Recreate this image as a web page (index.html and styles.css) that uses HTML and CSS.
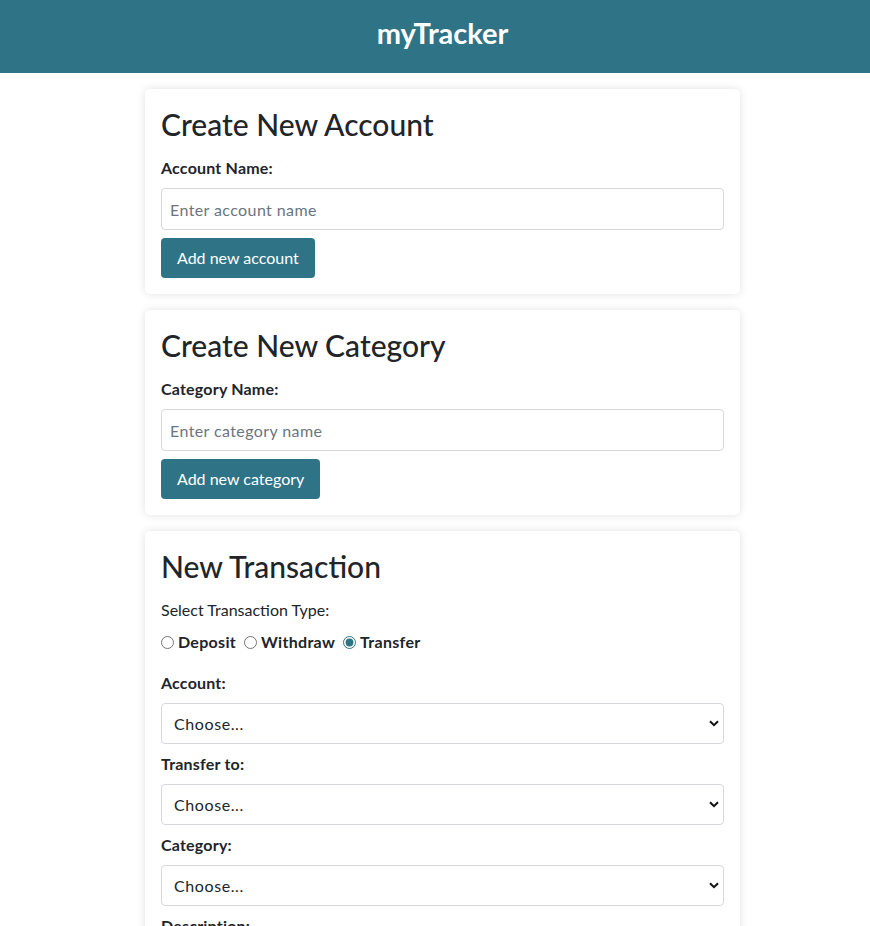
FILE: index.html
```html
<!DOCTYPE html>
<html lang="en">
<head>
<meta charset="utf-8">
<title>myTracker</title>
<link rel="stylesheet" href="styles.css">
</head>
<body>
<header class="topbar">
  <h1 class="brand">myTracker</h1>
</header>
<main class="page">
  <div class="column">
    <section class="card">
      <h2 class="card-title">Create New Account</h2>
      <label class="field-label" for="acc">Account Name:</label>
      <input class="text-input" id="acc" type="text" placeholder="Enter account name">
      <button class="btn">Add new account</button>
    </section>
    <section class="card">
      <h2 class="card-title">Create New Category</h2>
      <label class="field-label" for="cat">Category Name:</label>
      <input class="text-input" id="cat" type="text" placeholder="Enter category name">
      <button class="btn">Add new category</button>
    </section>
    <section class="card">
      <h2 class="card-title">New Transaction</h2>
      <p class="type-prompt">Select Transaction Type:</p>
      <div class="radio-row">
        <label class="radio-item"><input type="radio" name="t" class="radio"> Deposit</label>
        <label class="radio-item"><input type="radio" name="t" class="radio"> Withdraw</label>
        <label class="radio-item"><input type="radio" name="t" class="radio" checked> Transfer</label>
      </div>
      <label class="field-label">Account:</label>
      <div class="select-wrap">
        <select class="select"><option>Choose...</option></select>
        <svg class="chev" width="10" height="7" viewBox="0 0 10 7"><path d="M1 1.2 L5 5.2 L9 1.2" fill="none" stroke="#111" stroke-width="2"/></svg>
      </div>
      <label class="field-label">Transfer to:</label>
      <div class="select-wrap">
        <select class="select"><option>Choose...</option></select>
        <svg class="chev" width="10" height="7" viewBox="0 0 10 7"><path d="M1 1.2 L5 5.2 L9 1.2" fill="none" stroke="#111" stroke-width="2"/></svg>
      </div>
      <label class="field-label">Category:</label>
      <div class="select-wrap">
        <select class="select"><option>Choose...</option></select>
        <svg class="chev" width="10" height="7" viewBox="0 0 10 7"><path d="M1 1.2 L5 5.2 L9 1.2" fill="none" stroke="#111" stroke-width="2"/></svg>
      </div>
      <label class="field-label">Description:</label>
      <input class="text-input" type="text">
    </section>
  </div>
</main>
</body>
</html>
```
FILE: styles.css
```css
* { box-sizing: border-box; }
html, body { margin: 0; padding: 0; }
body {
  font-family: Lato, "Noto Sans", sans-serif;
  color: #212529;
  background: #fff;
  font-size: 16px;
  line-height: 24px;
}
.topbar {
  background: #2f7486;
  height: 73px;
  padding-left: 15px;
  display: flex;
  align-items: center;
  justify-content: center;
}
.brand {
  margin: 0;
  color: #fff;
  font-size: 29px;
  font-weight: 700;
  line-height: 34px;
  padding-bottom: 8px;
}
.page {
  padding: 16px 0 0 15px;
}
.column {
  width: 595px;
  margin: 0 auto;
  display: flex;
  flex-direction: column;
  gap: 16px;
}
.card {
  background: #fff;
  border-radius: 5px;
  box-shadow: 0 0 8px rgba(0, 0, 0, 0.12);
  padding: 16px;
  display: flex;
  flex-direction: column;
  align-items: flex-start;
}
.card-title {
  margin: 0 0 13px;
  font-size: 30px;
  font-weight: 500;
  line-height: 38px;
}
.field-label {
  font-weight: 700;
  margin-bottom: 8px;
  letter-spacing: 0.2px;
}
.text-input {
  width: 100%;
  height: 42px;
  border: 1px solid #d6d8db;
  border-radius: 4px;
  padding: 0 8px;
  font: inherit;
  font-size: 16px;
  letter-spacing: 0.4px;
  color: #212529;
  margin-bottom: 8px;
}
.text-input::placeholder { color: #6c757d; }
.btn {
  background: #2f7486;
  color: #fff;
  border: none;
  border-radius: 4px;
  height: 40px;
  padding: 0 16px;
  font: inherit;
  font-size: 16px;
}
.type-prompt {
  margin: 0 0 8px;
}
.radio-row {
  display: flex;
  align-items: center;
  gap: 8px;
  margin-bottom: 17px;
  font-weight: 700;
  letter-spacing: 0.3px;
}
.radio-item {
  display: flex;
  align-items: center;
  gap: 4px;
}
.radio {
  margin: 0;
  width: 13px;
  height: 13px;
  accent-color: #2f7486;
}
.select-wrap {
  position: relative;
  width: 100%;
  margin-bottom: 8px;
}
.select {
  width: 100%;
  height: 41px;
  appearance: none;
  -webkit-appearance: none;
  background: #fff;
  border: 1px solid #d6d8db;
  border-radius: 4px;
  padding: 0 12px;
  font: inherit;
  font-size: 16px;
  letter-spacing: 0.6px;
  color: #212529;
}
.chev {
  position: absolute;
  right: 5px;
  top: 17px;
  pointer-events: none;
}
```
